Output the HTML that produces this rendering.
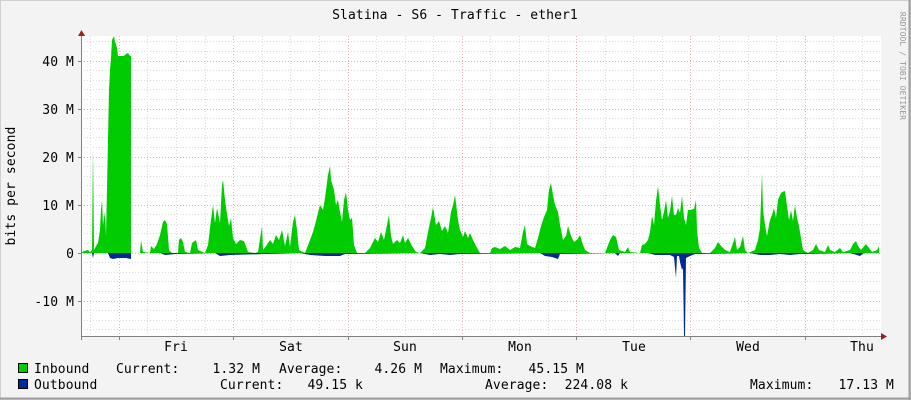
<!DOCTYPE html>
<html><head><meta charset="utf-8"><style>
html,body{margin:0;padding:0;background:#f3f3f3;}
svg{display:block;}
text{font-family:"DejaVu Sans Mono","Liberation Mono",monospace;font-size:13px;fill:#000;letter-spacing:0.1px;}
</style></head><body>
<svg width="911" height="400" xmlns="http://www.w3.org/2000/svg">
<rect x="0" y="0" width="911" height="400" fill="#f3f3f3"/>
<rect x="0.5" y="0.5" width="910" height="399" fill="none" stroke="#cfcfcf" stroke-width="1"/>
<line x1="0" y1="398.5" x2="911" y2="398.5" stroke="#9e9e9e" stroke-width="2"/>
<line x1="909.5" y1="0" x2="909.5" y2="400" stroke="#9e9e9e" stroke-width="2"/>
<rect x="81" y="36" width="800" height="300" fill="#ffffff"/>
<g stroke="#dcdcdc" stroke-dasharray="1,2" stroke-width="1">
<line x1="81" y1="41.5" x2="881" y2="41.5"/><line x1="81" y1="51.5" x2="881" y2="51.5"/>
<line x1="81" y1="70.5" x2="881" y2="70.5"/><line x1="81" y1="80.5" x2="881" y2="80.5"/><line x1="81" y1="89.5" x2="881" y2="89.5"/><line x1="81" y1="99.5" x2="881" y2="99.5"/>
<line x1="81" y1="118.5" x2="881" y2="118.5"/><line x1="81" y1="128.5" x2="881" y2="128.5"/><line x1="81" y1="137.5" x2="881" y2="137.5"/><line x1="81" y1="147.5" x2="881" y2="147.5"/>
<line x1="81" y1="166.5" x2="881" y2="166.5"/><line x1="81" y1="176.5" x2="881" y2="176.5"/><line x1="81" y1="185.5" x2="881" y2="185.5"/><line x1="81" y1="195.5" x2="881" y2="195.5"/>
<line x1="81" y1="214.5" x2="881" y2="214.5"/><line x1="81" y1="224.5" x2="881" y2="224.5"/><line x1="81" y1="233.5" x2="881" y2="233.5"/><line x1="81" y1="243.5" x2="881" y2="243.5"/>
<line x1="81" y1="262.5" x2="881" y2="262.5"/><line x1="81" y1="272.5" x2="881" y2="272.5"/><line x1="81" y1="281.5" x2="881" y2="281.5"/><line x1="81" y1="291.5" x2="881" y2="291.5"/>
<line x1="81" y1="310.5" x2="881" y2="310.5"/><line x1="81" y1="320.5" x2="881" y2="320.5"/><line x1="81" y1="329.5" x2="881" y2="329.5"/>
<line x1="90.5" y1="36" x2="90.5" y2="336"/><line x1="147.5" y1="36" x2="147.5" y2="336"/><line x1="176.5" y1="36" x2="176.5" y2="336"/><line x1="205.5" y1="36" x2="205.5" y2="336"/>
<line x1="262.5" y1="36" x2="262.5" y2="336"/><line x1="290.5" y1="36" x2="290.5" y2="336"/><line x1="319.5" y1="36" x2="319.5" y2="336"/>
<line x1="376.5" y1="36" x2="376.5" y2="336"/><line x1="405.5" y1="36" x2="405.5" y2="336"/><line x1="433.5" y1="36" x2="433.5" y2="336"/>
<line x1="490.5" y1="36" x2="490.5" y2="336"/><line x1="519.5" y1="36" x2="519.5" y2="336"/><line x1="548.5" y1="36" x2="548.5" y2="336"/>
<line x1="605.5" y1="36" x2="605.5" y2="336"/><line x1="633.5" y1="36" x2="633.5" y2="336"/><line x1="662.5" y1="36" x2="662.5" y2="336"/>
<line x1="719.5" y1="36" x2="719.5" y2="336"/><line x1="748.5" y1="36" x2="748.5" y2="336"/><line x1="776.5" y1="36" x2="776.5" y2="336"/>
<line x1="833.5" y1="36" x2="833.5" y2="336"/><line x1="862.5" y1="36" x2="862.5" y2="336"/>
</g>
<g stroke="#f0b0b0" stroke-dasharray="1,2" stroke-width="1">
<line x1="81" y1="61.5" x2="881" y2="61.5"/><line x1="81" y1="109.5" x2="881" y2="109.5"/><line x1="81" y1="157.5" x2="881" y2="157.5"/><line x1="81" y1="205.5" x2="881" y2="205.5"/><line x1="81" y1="253.5" x2="881" y2="253.5"/><line x1="81" y1="301.5" x2="881" y2="301.5"/>
<line x1="119.5" y1="36" x2="119.5" y2="336"/><line x1="233.5" y1="36" x2="233.5" y2="336"/><line x1="348.5" y1="36" x2="348.5" y2="336"/><line x1="462.5" y1="36" x2="462.5" y2="336"/><line x1="576.5" y1="36" x2="576.5" y2="336"/><line x1="690.5" y1="36" x2="690.5" y2="336"/><line x1="805.5" y1="36" x2="805.5" y2="336"/>
</g>
<polygon fill="#00cc00" points="81,253 84,251 88,250 90,252 92,250 93,148 94,250 96,246 98,243 100,230 101,210 102,200 103,225 105,212 106,236 108,140 109,90 110,70 111,58 112,40 113,38 114,36 115,42 116,44 117,48 118,56 124,56 126,54 128,53 130,56 131,56 131,253 140,253 141,240 143,252 150,253 151,246 154,249 157,244 160,235 163,222 165,220 167,224 169,250 172,253 178,253 179,240 181,238 183,242 185,252 190,253 192,243 196,240 198,250 205,253 208,245 211,220 213,205 215,223 217,208 220,223 222,185 223,180 225,200 227,214 229,226 231,218 233,238 236,244 240,240 244,241 248,252 255,253 258,252 262,226 263,250 266,246 270,240 273,244 276,235 279,240 282,230 285,246 288,232 290,247 293,222 295,215 297,230 299,250 305,253 310,240 313,232 316,221 320,205 323,210 325,198 328,175 330,166 331,180 334,190 336,205 338,200 340,212 342,222 344,200 346,192 348,210 350,220 352,218 354,245 357,253 365,253 370,248 375,238 378,242 381,232 384,240 387,225 389,215 391,236 393,244 397,240 400,243 403,235 405,243 408,238 412,246 416,252 420,253 425,248 428,232 431,218 433,207 436,225 439,221 442,231 445,226 448,233 451,212 453,205 455,195 458,220 460,230 463,237 465,231 468,238 470,233 473,240 476,246 480,253 490,253 492,248 495,247 500,249 505,246 510,250 515,247 520,248 523,232 525,225 527,244 530,246 535,248 538,238 541,226 544,217 547,210 549,190 551,183 553,195 555,205 558,212 560,225 563,240 566,236 568,226 571,236 574,242 577,240 580,235 582,242 585,250 590,253 605,253 610,240 613,235 616,237 619,250 625,252 628,247 630,252 640,253 642,245 645,244 648,240 650,232 652,216 654,225 656,201 658,186 660,205 662,220 664,212 666,200 668,218 670,211 672,196 674,215 676,215 678,208 680,213 682,196 684,218 686,225 688,210 690,210 694,209 696,200 697,230 699,248 702,253 710,253 715,248 718,242 721,246 725,250 730,252 733,243 735,237 737,250 740,247 743,236 745,250 748,253 755,250 758,240 760,228 762,173 763,210 765,225 767,236 770,220 772,215 774,208 776,218 778,200 780,195 782,192 785,191 787,206 789,220 791,210 793,221 795,205 797,218 799,226 801,238 803,250 808,253 813,250 816,244 819,250 825,252 828,245 830,250 835,252 840,248 843,252 850,250 853,244 856,241 858,246 861,250 866,244 869,248 872,252 877,250 879,246 879,253"/>
<polygon fill="#002a97" points="90,253 92,253 93,258 94,253 108,253 110,258 113,259 118,258 126,258 131,259 131,253 160,253 165,255 175,254 215,253 220,256 230,255 300,253 310,255 325,256 340,256 345,254 420,253 430,255 440,254 450,255 460,254 540,253 545,256 552,257 558,259 560,254 615,253 618,256 620,253 648,253 655,255 670,255 674,257 676,278 677,256 679,256 680,262 682,270 683,268 684,336 685,336 686,258 690,256 695,254 750,253 760,255 770,255 780,254 790,255 800,254 850,253 860,256 864,253 879,253"/>
<line x1="81" y1="336.5" x2="885" y2="336.5" stroke="#808080"/>
<line x1="81.5" y1="32" x2="81.5" y2="340" stroke="#808080"/>
<polygon points="78,36 85,36 81.5,30" fill="#a02020"/>
<polygon points="881,333 881,340 887,336.5" fill="#a02020"/>
<g stroke="#808080">
<line x1="78" y1="61.5" x2="81" y2="61.5"/><line x1="78" y1="109.5" x2="81" y2="109.5"/><line x1="78" y1="157.5" x2="81" y2="157.5"/><line x1="78" y1="205.5" x2="81" y2="205.5"/><line x1="78" y1="253.5" x2="81" y2="253.5"/><line x1="78" y1="301.5" x2="81" y2="301.5"/>
<line x1="119.5" y1="336" x2="119.5" y2="340"/><line x1="233.5" y1="336" x2="233.5" y2="340"/><line x1="348.5" y1="336" x2="348.5" y2="340"/><line x1="462.5" y1="336" x2="462.5" y2="340"/><line x1="576.5" y1="336" x2="576.5" y2="340"/><line x1="690.5" y1="336" x2="690.5" y2="340"/><line x1="805.5" y1="336" x2="805.5" y2="340"/>
</g>
<text x="455" y="19" text-anchor="middle">Slatina - S6 - Traffic - ether1</text>
<text x="74" y="66" text-anchor="end">40 M</text>
<text x="74" y="114" text-anchor="end">30 M</text>
<text x="74" y="162" text-anchor="end">20 M</text>
<text x="74" y="210" text-anchor="end">10 M</text>
<text x="74" y="258" text-anchor="end">0</text>
<text x="74" y="306" text-anchor="end">-10 M</text>
<text transform="translate(15,186) rotate(-90)" text-anchor="middle">bits per second</text>
<text transform="translate(900,66) rotate(90)" text-anchor="middle" style="font-size:8px;fill:#999">RRDTOOL / TOBI OETIKER</text>
<text x="176" y="351" text-anchor="middle">Fri</text>
<text x="291" y="351" text-anchor="middle">Sat</text>
<text x="405" y="351" text-anchor="middle">Sun</text>
<text x="520" y="351" text-anchor="middle">Mon</text>
<text x="634" y="351" text-anchor="middle">Tue</text>
<text x="748" y="351" text-anchor="middle">Wed</text>
<text x="862" y="351" text-anchor="middle">Thu</text>
<rect x="18.5" y="363.5" width="9" height="9" fill="#00cc00" stroke="#000"/>
<rect x="18.5" y="379.5" width="9" height="9" fill="#002a97" stroke="#000"/>
<text x="34" y="373">Inbound</text>
<text x="116" y="373">Current:</text>
<text x="260" y="373" text-anchor="end">1.32 M</text>
<text x="279" y="373">Average:</text>
<text x="422" y="373" text-anchor="end">4.26 M</text>
<text x="440" y="373">Maximum:</text>
<text x="584" y="373" text-anchor="end">45.15 M</text>
<text x="34" y="389">Outbound</text>
<text x="220" y="389">Current:</text>
<text x="363" y="389" text-anchor="end">49.15 k</text>
<text x="485" y="389">Average:</text>
<text x="628" y="389" text-anchor="end">224.08 k</text>
<text x="750" y="389">Maximum:</text>
<text x="894" y="389" text-anchor="end">17.13 M</text>
</svg>
</body></html>
